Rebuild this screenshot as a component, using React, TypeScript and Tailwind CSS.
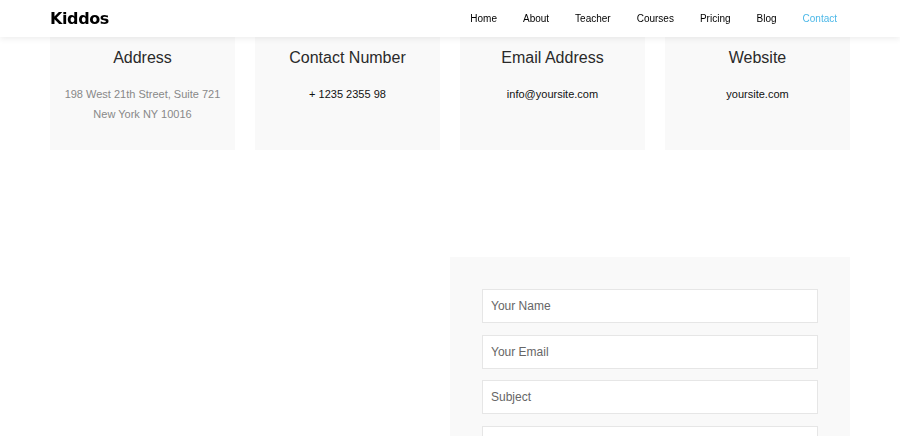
import React from "react";

const navItems = ["Home", "About", "Teacher", "Courses", "Pricing", "Blog", "Contact"];

const infoCards = [
  { title: "Address", lines: ["198 West 21th Street, Suite 721", "New York NY 10016"], muted: true },
  { title: "Contact Number", lines: ["+ 1235 2355 98"] },
  { title: "Email Address", lines: ["info@yoursite.com"] },
  { title: "Website", lines: ["yoursite.com"] },
];

export default function App() {
  return (
    <div className="min-h-screen bg-white font-['Liberation_Sans',Arial,sans-serif] text-[#222]">
      {/* Fixed navbar */}
      <header className="fixed inset-x-0 top-0 z-10 h-[37px] bg-white shadow-[0_2px_6px_rgba(0,0,0,0.07)]">
        <div className="mx-auto flex h-full w-[800px] items-center justify-between">
          <span className="font-['DejaVu_Sans',sans-serif] text-[16px] font-bold tracking-tight text-black">
            Kiddos
          </span>
          <nav className="flex items-center">
            {navItems.map((item) => (
              <a
                key={item}
                className={
                  "px-[13px] text-[10px] " +
                  (item === "Contact" ? "text-[#4cb8e8]" : "text-black")
                }
              >
                {item}
              </a>
            ))}
          </nav>
        </div>
      </header>

      {/* Info cards */}
      <section className="mx-auto grid w-[800px] grid-cols-4 gap-5">
        {infoCards.map((card) => (
          <div key={card.title} className="h-[150px] bg-[#f9f9f9] pt-[48px] text-center">
            <h3 className="text-[16px] leading-5 text-[#2a2a2a]">{card.title}</h3>
            <div
              className={
                "mt-[16px] text-[11px] leading-5 " +
                (card.muted ? "text-[#888]" : "text-[#111]")
              }
            >
              {card.lines.map((l) => (
                <p key={l}>{l}</p>
              ))}
            </div>
          </div>
        ))}
      </section>

      {/* Map + form */}
      <section className="mx-auto mt-[107px] grid w-[800px] grid-cols-2">
        <div />
        <div className="bg-[#f9f9f9] px-8 pt-8 pb-8">
          <form className="flex flex-col gap-[11.5px]">
            {["Your Name", "Your Email", "Subject", "Message"].map((p) => (
              <input
                key={p}
                placeholder={p}
                className="h-[34px] w-full border border-[#e6e6e6] bg-white px-2 text-[12px] text-[#333] placeholder:text-[#666] outline-none"
              />
            ))}
          </form>
        </div>
      </section>
    </div>
  );
}
